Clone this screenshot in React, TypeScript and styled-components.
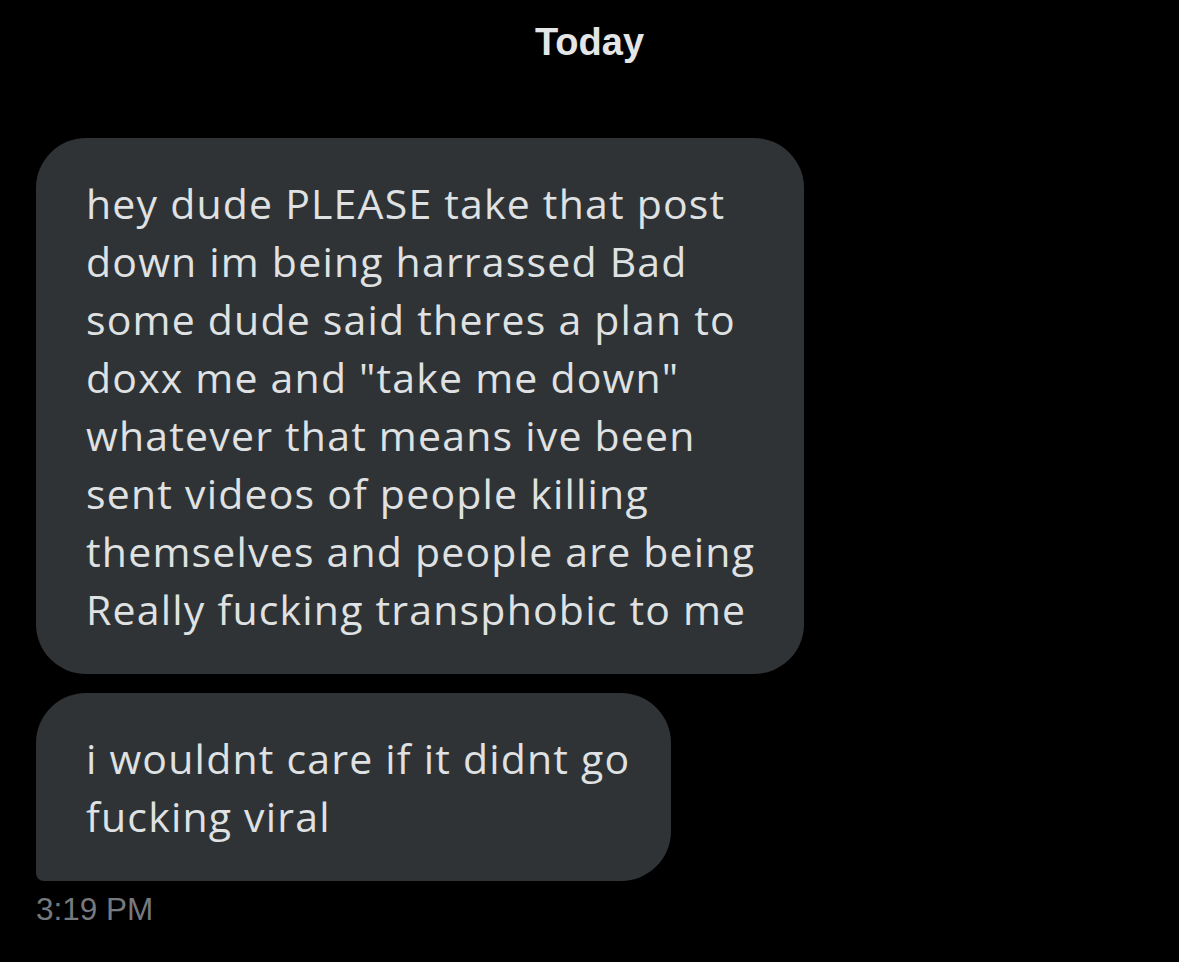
import React from "react";
import styled, { createGlobalStyle } from "styled-components";

const Global = createGlobalStyle`
  html, body { margin: 0; padding: 0; background: #000; }
  body { width: 1179px; height: 962px; overflow: hidden; }
`;

const Page = styled.div`
  width: 1179px;
  height: 962px;
  background: #000;
  display: flex;
  flex-direction: column;
  align-items: flex-start;
  padding: 0 0 0 36px;
  box-sizing: border-box;
`;

const DateLabel = styled.div`
  align-self: stretch;
  margin-left: -36px;
  text-align: center;
  font-family: "Liberation Sans", Arial, sans-serif;
  font-weight: 700;
  font-size: 38px;
  line-height: 42px;
  color: #e3e5e6;
  padding-top: 21px;
  margin-bottom: 75px;
`;

const Bubble = styled.div<{ $width: number; $tail?: boolean }>`
  width: ${(p) => p.$width}px;
  box-sizing: border-box;
  background: #2f3336;
  border-radius: ${(p) => (p.$tail ? "50px 50px 50px 8px" : "50px")};
  padding: 36px 50px;
  font-family: "Open Sans", "Noto Sans", sans-serif;
  font-size: 41px;
  letter-spacing: 1.2px;
  line-height: 58px;
  color: #dfe1e2;
  margin-bottom: 19px;
`;

const Line = styled.span`
  display: block;
  white-space: nowrap;
`;

const Time = styled.div`
  font-family: "Liberation Sans", Arial, sans-serif;
  font-size: 31.5px;
  line-height: 36px;
  color: #767a7f;
  margin-top: -9px;
`;

const first = [
  "hey dude PLEASE take that post",
  "down im being harrassed Bad",
  "some dude said theres a plan to",
  'doxx me and "take me down"',
  "whatever that means ive been",
  "sent videos of people killing",
  "themselves and people are being",
  "Really fucking transphobic to me",
];

const second = ["i wouldnt care if it didnt go", "fucking viral"];

export default function App() {
  return (
    <>
      <Global />
      <Page>
        <DateLabel>Today</DateLabel>
        <Bubble $width={768}>
          {first.map((l) => (
            <Line key={l}>{l}</Line>
          ))}
        </Bubble>
        <Bubble $width={635} $tail>
          {second.map((l) => (
            <Line key={l}>{l}</Line>
          ))}
        </Bubble>
        <Time>3:19 PM</Time>
      </Page>
    </>
  );
}
